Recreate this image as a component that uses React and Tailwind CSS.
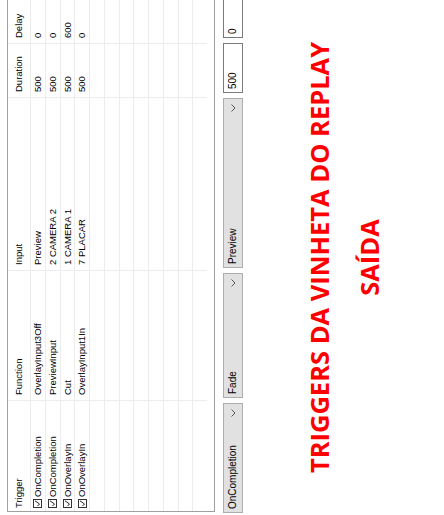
import React from "react";

const rows = [
  ["OnCompletion", "OverlayInput3Off", "Preview", "500", "0"],
  ["OnCompletion", "PreviewInput", "2 CAMERA 2", "500", "0"],
  ["OnOverlayIn", "Cut", "1 CAMERA 1", "500", "600"],
  ["OnOverlayIn", "OverlayInput1In", "7 PLACAR", "500", "0"],
];

const widths = ["w-[111px]", "w-[130px]", "w-[173px]", "w-[54px]", "w-[80px]"];

function Check() {
  return (
    <div className="w-[9px] h-[9px] border border-[#333] bg-white flex items-center justify-center shrink-0">
      <svg width="7" height="7" viewBox="0 0 7 7">
        <path d="M1 3.5 L3 5.5 L6.2 1" fill="none" stroke="#222" strokeWidth="1" />
      </svg>
    </div>
  );
}

function Combo({ label, w }) {
  return (
    <div className={`${w} h-[20px] bg-[#e1e1e1] border border-[#adadad] flex items-center justify-between pl-[3px] pr-[5px] shrink-0`}>
      <span>{label}</span>
      <svg width="8" height="5" viewBox="0 0 8 5">
        <path d="M0.5 0.5 L4 4 L7.5 0.5" fill="none" stroke="#555" strokeWidth="1" />
      </svg>
    </div>
  );
}

export default function App() {
  const empty = Array.from({ length: 8 });
  return (
    <div className="w-[444px] h-[515px] bg-white overflow-hidden">
      <div
        className="w-[515px] h-[444px] origin-top-left -rotate-90 translate-y-[515px] bg-white text-black text-[9.5px] leading-none"
        style={{ fontFamily: '"Liberation Sans", Arial, sans-serif' }}
      >
        <div className="pt-[7px] pl-[3px]">
          <div className="w-[530px] h-[208px] border-l border-t border-b border-[#a0a0a0] overflow-hidden">
            <div className="flex h-[22px]">
              {["Trigger", "Function", "Input", "Duration", "Delay"].map((h, i) => (
                <div
                  key={h}
                  className={`${widths[i]} ${i === 0 ? "pl-[3px]" : "pl-[5px]"} border-r border-[#ececec] flex items-center shrink-0`}
                >
                  {h}
                </div>
              ))}
            </div>
            {rows.map((r, ri) => (
              <div key={ri} className="flex h-[14.75px] border-t border-[#ececec]">
                {r.map((c, i) => (
                  <div
                    key={i}
                    className={`${widths[i]} ${i === 0 ? "pl-[3px] gap-[2px]" : "pl-[5px]"} border-r border-[#ececec] flex items-center shrink-0`}
                  >
                    {i === 0 && <Check />}
                    <span>{c}</span>
                  </div>
                ))}
              </div>
            ))}
            {empty.map((_, ri) => (
              <div key={ri} className="flex h-[14.75px] border-t border-[#ececec]">
                {widths.map((w, i) => (
                  <div key={i} className={`${w} border-r border-[#ececec] shrink-0`} />
                ))}
              </div>
            ))}
          </div>
        </div>

        <div className="flex gap-[5px] pl-[2px] mt-[8px] text-[10px]">
          <Combo label="OnCompletion" w="w-[110px]" />
          <Combo label="Fade" w="w-[125px]" />
          <Combo label="Preview" w="w-[170px]" />
          <div className="w-[50px] h-[20px] bg-white border border-[#7a7a7a] flex items-center pl-[3px] shrink-0">
            500
          </div>
          <div className="w-[60px] h-[20px] bg-white border border-[#7a7a7a] flex items-center pl-[3px] shrink-0">
            0
          </div>
        </div>

        <div
          className="mt-[63px] text-center text-[#ff0000] font-bold text-[25.5px] leading-[26px]"
          style={{ fontFamily: '"Open Sans", sans-serif' }}
        >
          <div>TRIGGERS DA VINHETA DO REPLAY</div>
          <div className="mt-[24px]">SAÍDA</div>
        </div>
      </div>
    </div>
  );
}
